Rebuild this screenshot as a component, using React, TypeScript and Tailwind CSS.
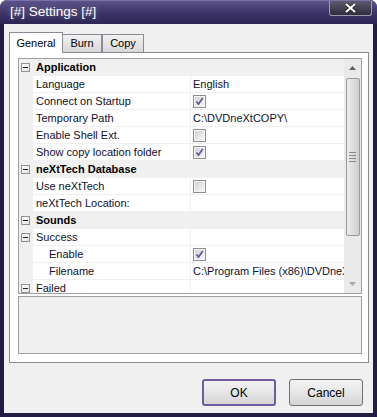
import React from 'react';

type Row =
  | { kind: 'cat'; label: string }
  | { kind: 'item'; label: string; value?: string; check?: boolean; sub?: boolean; group?: boolean };

const rows: Row[] = [
  { kind: 'cat', label: 'Application' },
  { kind: 'item', label: 'Language', value: 'English' },
  { kind: 'item', label: 'Connect on Startup', check: true },
  { kind: 'item', label: 'Temporary Path', value: 'C:\\DVDneXtCOPY\\' },
  { kind: 'item', label: 'Enable Shell Ext.', check: false },
  { kind: 'item', label: 'Show copy location folder', check: true },
  { kind: 'cat', label: 'neXtTech Database' },
  { kind: 'item', label: 'Use neXtTech', check: false },
  { kind: 'item', label: 'neXtTech Location:' },
  { kind: 'cat', label: 'Sounds' },
  { kind: 'item', label: 'Success', group: true },
  { kind: 'item', label: 'Enable', check: true, sub: true },
  { kind: 'item', label: 'Filename', value: 'C:\\Program Files (x86)\\DVDneXtCOPY\\success.wav', sub: true },
  { kind: 'item', label: 'Failed', group: true },
];

function Minus() {
  return (
    <div className="w-[9px] h-[9px] border border-[#929292] bg-gradient-to-br from-white to-[#e2e2e2] flex items-center justify-center">
      <div className="w-[5px] h-px bg-[#1e1e1e]" />
    </div>
  );
}

function Check({ on }: { on: boolean }) {
  return (
    <div className="w-[13px] h-[13px] border border-[#8f8f8f] bg-[#f6f6f6] p-px">
      <div className="w-full h-full bg-gradient-to-br from-[#d2d2d2] to-[#f7f7f7] flex items-center justify-center">
        {on && (
          <svg width="9" height="9" viewBox="0 0 9 9">
            <path d="M1.5 4.5 L3.5 7 L7.8 1" fill="none" stroke="#5f5a9c" strokeWidth="1.7" />
          </svg>
        )}
      </div>
    </div>
  );
}

function GridRow({ row }: { row: Row }) {
  if (row.kind === 'cat') {
    return (
      <div className="flex h-[17px] shrink-0 bg-[#f0f0f0] items-center">
        <div className="w-[14px] shrink-0 pl-[2px]">
          <Minus />
        </div>
        <div className="pl-[3px] font-bold text-black">{row.label}</div>
      </div>
    );
  }
  return (
    <div className="flex h-[17px] shrink-0">
      <div className="w-[14px] shrink-0 bg-[#f0f0f0] pl-[2px] flex items-center">
        {row.group && <Minus />}
      </div>
      <div
        className={`w-[158px] shrink-0 bg-white border-b border-r border-[#f0f0f0] flex items-center whitespace-nowrap overflow-hidden text-[#10102c] ${
          row.sub ? 'pl-[16px]' : 'pl-[3px]'
        }`}
      >
        {row.label}
      </div>
      <div className="flex-1 min-w-0 bg-white border-b border-[#f0f0f0] pl-[2px] flex items-center whitespace-nowrap overflow-hidden text-[#10102c]">
        {row.check !== undefined ? <Check on={row.check} /> : row.value}
      </div>
    </div>
  );
}

function ScrollBar() {
  return (
    <div className="w-[17px] shrink-0 bg-[#eaeaea] flex flex-col items-center">
      <div className="h-[18px] w-full flex items-center justify-center">
        <svg width="7" height="4" viewBox="0 0 7 4">
          <path d="M0 4 L3.5 0 L7 4 Z" fill="#606060" />
        </svg>
      </div>
      <div className="h-[158px] w-[14px] mt-px border border-[#9b9b9b] rounded-[2px] bg-gradient-to-r from-[#ececec] via-[#dedede] to-[#cdcdcd] flex flex-col items-center justify-center gap-[2px]">
        <div className="w-[7px] h-px bg-[#888]" />
        <div className="w-[7px] h-px bg-[#888]" />
        <div className="w-[7px] h-px bg-[#888]" />
        <div className="w-[7px] h-px bg-[#888]" />
      </div>
      <div className="flex-1" />
      <div className="h-[18px] w-full flex items-center justify-center">
        <svg width="7" height="4" viewBox="0 0 7 4">
          <path d="M0 0 L7 0 L3.5 4 Z" fill="#a8a8a8" />
        </svg>
      </div>
    </div>
  );
}

export default function App() {
  return (
    <div className="w-[377px] h-[417px] bg-[#231d45] rounded-t-[7px] flex flex-col font-['Liberation_Sans',Arial,sans-serif] text-[11px] overflow-hidden">
      <div className="h-[24px] shrink-0 flex items-center justify-between rounded-t-[7px] bg-gradient-to-b from-[#5c5389] via-[#3d3568] to-[#2c2553] border-t border-[#7a72a6]">
        <div className="pl-[10px] text-[13.5px] text-white font-['Liberation_Sans',Arial,sans-serif] [text-shadow:0_0_6px_rgba(255,255,255,0.35)]">
          [#] Settings [#]
        </div>
        <div className="self-start mr-[5px] w-[43px] h-[15px] rounded-b-[3px] border border-t-0 border-[#9c9aae] bg-gradient-to-b from-[#5d5a6e] to-[#2f2d3c] flex items-center justify-center">
          <svg width="13" height="10" viewBox="0 0 13 10">
            <path d="M2 1 L11 9 M11 1 L2 9" stroke="#1a1a1a" strokeWidth="3.4" />
            <path d="M2 1 L11 9 M11 1 L2 9" stroke="#ffffff" strokeWidth="2.2" />
          </svg>
        </div>
      </div>

      <div className="flex-1 mx-[4px] mb-[4px] bg-[#f0f0f0] flex flex-col pl-[5px] pr-[4px] pt-[8px]">
        <div className="h-[20px] flex items-end text-black">
          <div className="h-[21px] w-[54px] -mb-px relative z-10 bg-white border border-b-0 border-[#898c95] flex items-center justify-center">
            General
          </div>
          <div className="h-[18px] w-[40px] -ml-px border border-b-0 border-[#898c95] bg-gradient-to-b from-[#f2f2f2] to-[#d8d8d8] flex items-center justify-center">
            Burn
          </div>
          <div className="h-[18px] w-[42px] border border-b-0 border-[#898c95] bg-gradient-to-b from-[#f2f2f2] to-[#d8d8d8] flex items-center justify-center">
            Copy
          </div>
        </div>

        <div className="h-[311px] bg-white border border-[#898c95] pt-[5px] pl-[8px] pr-[6px] pb-[8px] flex flex-col gap-[2px]">
          <div className="h-[236px] shrink-0 border border-[#a0a0a0] flex overflow-hidden">
            <div className="flex-1 flex flex-col overflow-hidden">
              {rows.map((r, i) => (
                <GridRow key={i} row={r} />
              ))}
            </div>
            <ScrollBar />
          </div>
          <div className="flex-1 border border-[#a0a0a0] bg-[#f0f0f0]" />
        </div>

        <div className="mt-[16px] flex justify-end gap-[13px] pr-[6px] text-black">
          <button className="w-[74px] h-[27px] rounded-[3px] border-2 border-[#6e5c9c] bg-gradient-to-b from-[#f3f3f3] via-[#e6e6e6] to-[#d4d4d4] text-[12px]">
            OK
          </button>
          <button className="w-[74px] h-[27px] rounded-[3px] border border-[#707070] bg-gradient-to-b from-[#f3f3f3] via-[#e6e6e6] to-[#d4d4d4] text-[12px]">
            Cancel
          </button>
        </div>
      </div>
    </div>
  );
}
